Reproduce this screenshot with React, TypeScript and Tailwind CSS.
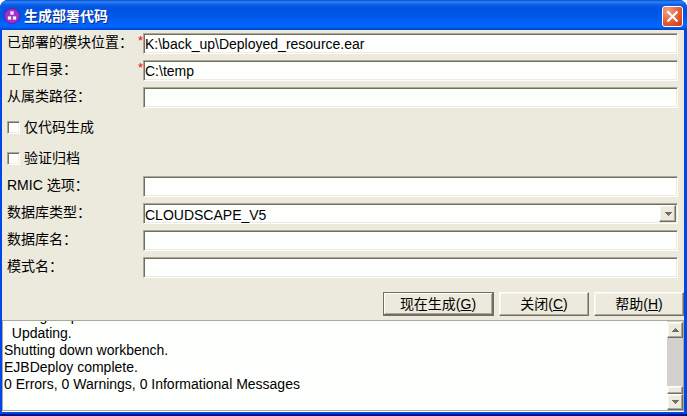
import { useEffect, useRef, type ReactNode } from "react";

const SUNKEN =
  "h-[21px] w-full min-w-0 rounded-none border border-t-[#aca899] border-l-[#aca899] border-r-white border-b-white bg-[#fdfffc] pt-px pl-px shadow-[inset_1px_1px_#716f64,inset_-1px_-1px_#f1e8df] outline-none";
const RAISED =
  "border border-t-white border-l-white border-r-[#716f64] border-b-[#716f64] bg-[#ece9dd] shadow-[inset_-1px_-1px_#aca899,inset_1px_1px_#f6f4ec]";

const LOG = [
  "Writing output file",
  "  Updating.",
  "Shutting down workbench.",
  "EJBDeploy complete.",
  "0 Errors, 0 Warnings, 0 Informational Messages",
  "",
].join("\n");

function ModuleIcon() {
  return (
    <svg width="16" height="16" viewBox="0 0 16 16" aria-hidden="true">
      <circle cx="8" cy="8" r="7.5" fill="#a032cc" stroke="#6c1b9c" />
      <path d="M6 3h4v4H6zM3.5 8h4v4h-4zM8.5 8h4v4h-4z" fill="#b565d6" />
      <path d="M6.5 3.5h3v3h-3zM4 8.5h3v3H4zM9 8.5h3v3H9z" fill="#fdf3f8" />
    </svg>
  );
}

function Arrow({ up = false }: { up?: boolean }) {
  return (
    <svg width="8" height="4" viewBox="0 0 8 4" shapeRendering="crispEdges" aria-hidden="true">
      <path d={up ? "M0 4h8L4 0z" : "M0 0h8L4 4z"} fill="#716f64" />
    </svg>
  );
}

function Row({
  id,
  label,
  required = false,
  children,
}: {
  id: string;
  label: string;
  required?: boolean;
  children: ReactNode;
}) {
  return (
    <div className="flex h-[21px] items-center">
      <label htmlFor={id} className="w-[131px] shrink-0 pb-[3px] leading-5">
        {label}
      </label>
      <span className="w-[5px] shrink-0 self-start text-[13px] leading-4 text-[#ff0000]">{required && "*"}</span>
      {children}
    </div>
  );
}

function Check({ id, label }: { id: string; label: string }) {
  return (
    <div className="flex h-5 items-center gap-1">
      <input
        id={id}
        type="checkbox"
        className="size-[13px] appearance-none border border-t-[#aca899] border-l-[#aca899] border-r-white border-b-white bg-[#fdfffc] shadow-[inset_1px_1px_#716f64,inset_-1px_-1px_#f1efe2] checked:bg-[#716f64]"
      />
      <label htmlFor={id} className="leading-5">
        {label}
      </label>
    </div>
  );
}

export default function App() {
  const logRef = useRef<HTMLTextAreaElement>(null);

  // keep the newest output in view
  useEffect(() => {
    if (logRef.current) logRef.current.scrollTop = logRef.current.scrollHeight;
  }, []);

  return (
    <div className="overflow-hidden rounded-t-lg border-b-2 border-[#00138c] bg-[#0046e8] font-['Liberation_Sans','Noto_Sans_CJK_SC',sans-serif] text-[14px] text-black">
      <header className="flex h-[30px] items-center gap-1 bg-[linear-gradient(#0a4ed0_0,#2b83f8_2px,#0b5be6_5px,#0054e3_9px,#0057ea_17px,#0066ff_24px,#0064fa_27px,#003fcb_30px)] pt-0.5 pr-1 pl-1">
        <ModuleIcon />
        <h1 className="flex-1 text-[14px] leading-5 font-bold text-white [text-shadow:1px_1px_#0a2a8c]">生成部署代码</h1>
        <button
          type="button"
          aria-label="关闭窗口"
          className="flex size-[21px] items-center justify-center rounded-[3px] border border-white bg-[radial-gradient(circle_at_25%_20%,#f0a087,#e1582f_60%,#c63a10)]"
        >
          <svg width="13" height="13" viewBox="0 0 13 13" aria-hidden="true">
            <path d="M1.5 1.5l10 10M11.5 1.5l-10 10" stroke="#fff" strokeWidth="2.2" />
          </svg>
        </button>
      </header>

      <main className="mr-[3px] mb-0.5 ml-0.5 border-b border-white bg-[#ece9dd]">
        <form className="pt-[3px]" onSubmit={(e) => e.preventDefault()}>
          <div className="flex flex-col gap-1.5 pr-1.5 pl-[5px]">
            <Row id="module" label="已部署的模块位置：" required>
              <input id="module" required className={SUNKEN} defaultValue="K:\back_up\Deployed_resource.ear" />
            </Row>
            <Row id="workdir" label="工作目录：" required>
              <input id="workdir" required className={SUNKEN} defaultValue="C:\temp" />
            </Row>
            <Row id="classpath" label="从属类路径：">
              <input id="classpath" className={SUNKEN} />
            </Row>
            <div className="flex flex-col gap-[11px] pt-[3px] pb-0.5">
              <Check id="codegen" label="仅代码生成" />
              <Check id="verify" label="验证归档" />
            </div>
            <Row id="rmic" label="RMIC 选项：">
              <input id="rmic" className={SUNKEN} />
            </Row>
            <Row id="dbtype" label="数据库类型：">
              <div className="relative flex-1">
                <select id="dbtype" className={`${SUNKEN} block appearance-none`}>
                  <option>CLOUDSCAPE_V5</option>
                </select>
                <span
                  className={`${RAISED} pointer-events-none absolute inset-y-0.5 right-0.5 flex w-[17px] items-center justify-center`}
                >
                  <Arrow />
                </span>
              </div>
            </Row>
            <Row id="dbname" label="数据库名：">
              <input id="dbname" className={SUNKEN} />
            </Row>
            <Row id="schema" label="模式名：">
              <input id="schema" className={SUNKEN} />
            </Row>
          </div>

          <div className="mt-3.5 flex justify-end gap-[5px]">
            <button
              type="submit"
              className="h-6 w-[111px] border border-r-2 border-b-2 border-[#716f64] bg-[#ece9dd] leading-5 shadow-[inset_1px_1px_#fff,inset_-1px_-1px_#aca899]"
            >
              现在生成(<u>G</u>)
            </button>
            <button type="button" className={`${RAISED} h-6 w-[90px] leading-5`}>
              关闭(<u>C</u>)
            </button>
            <button type="button" className={`${RAISED} h-6 w-[90px] leading-5`}>
              帮助(<u>H</u>)
            </button>
          </div>
        </form>

        <div className="mt-1 flex h-[91px] border border-[#aca899] bg-[#fdfffc]">
          <textarea
            ref={logRef}
            readOnly
            aria-label="输出"
            className="min-w-0 flex-1 resize-none overflow-hidden pl-px leading-[17px] outline-none"
            defaultValue={LOG}
          />
          <div className="flex w-4 flex-col bg-[#d3d1cd] pt-px" aria-hidden="true">
            <span className={`${RAISED} flex h-4 items-center justify-center`}>
              <Arrow up />
            </span>
            <span className={`${RAISED} mt-auto h-2`} />
            <span className={`${RAISED} flex h-4 items-center justify-center`}>
              <Arrow />
            </span>
          </div>
        </div>
      </main>
    </div>
  );
}
